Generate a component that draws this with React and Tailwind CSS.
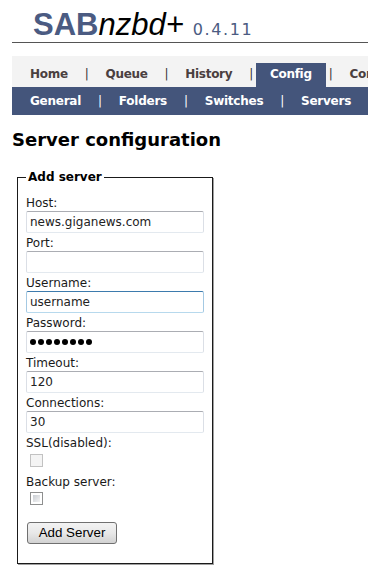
export default function App() {
  const Sep = ({ light }) => (
    <span className={light ? "mx-[3px] font-normal text-white" : "mx-[3px] font-normal text-[#333]"}>|</span>
  );

  const Field = ({ label, value, focused, password }) => (
    <>
      <div className="h-[16px] leading-[16px]">{label}</div>
      <div
        className={
          focused
            ? "mb-[2px] flex h-[22px] w-[178px] items-center rounded-[2px] border border-x-[#a4c9e3] border-t-[#3d7bad] border-b-[#b7d9ed] bg-white pl-[3px] text-[#222]"
            : "mb-[2px] flex h-[22px] w-[178px] items-center rounded-[2px] border border-x-[#dbdfe6] border-t-[#abadb3] border-b-[#e3e9ef] bg-white pl-[3px] text-[#222]"
        }
      >
        {password ? (
          <div className="flex gap-[2px]">
            {[0, 1, 2, 3, 4, 5, 6, 7].map((i) => (
              <span key={i} className="h-[6px] w-[6px] rounded-full bg-black" />
            ))}
          </div>
        ) : (
          value
        )}
      </div>
    </>
  );

  return (
    <div className="h-[571px] w-[368px] overflow-hidden bg-white pl-[12px] font-['DejaVu_Sans',Verdana,sans-serif] text-[12px] text-[#1a1a1a]">
      {/* Header */}
      <div className="flex h-[43px] items-baseline border-b border-[#555] pl-[21px] pt-[9px] leading-[31px]">
        <span className="font-['Liberation_Sans',Arial,sans-serif] text-[31px] font-bold text-[#4b5b82]">SAB</span>
        <span className="font-['Liberation_Sans',Arial,sans-serif] text-[31px] italic text-black">nzbd+</span>
        <span className="ml-[9px] text-[16px] tracking-[1.6px] text-[#4b5b82]">0.4.11</span>
      </div>

      {/* Top nav */}
      <div className="mt-[13px] flex h-[31px] items-end whitespace-nowrap bg-[#f3f3f3] pl-[4px] font-bold tracking-[-0.3px]">
        <span className="h-[24px] px-[14px] leading-[22px] text-[#4a4040]">Home</span>
        <span className="h-[24px] leading-[22px]"><Sep /></span>
        <span className="h-[24px] px-[14px] leading-[22px] text-[#4a4040]">Queue</span>
        <span className="h-[24px] leading-[22px]"><Sep /></span>
        <span className="h-[24px] px-[14px] leading-[22px] text-[#4a4040]">History</span>
        <span className="h-[24px] leading-[22px]"><Sep /></span>
        <span className="h-[24px] bg-[#44557b] px-[14px] leading-[22px] text-white">Config</span>
        <span className="h-[24px] leading-[22px]"><Sep /></span>
        <span className="h-[24px] px-[14px] leading-[22px] text-[#4a4040]">Connections</span>
      </div>

      {/* Sub nav */}
      <div className="flex h-[28px] items-center whitespace-nowrap bg-[#44557b] pl-[4px] font-bold leading-[28px] tracking-[-0.25px] text-white">
        <span className="px-[14px]">General</span>
        <Sep light />
        <span className="px-[14px]">Folders</span>
        <Sep light />
        <span className="px-[14px]">Switches</span>
        <Sep light />
        <span className="px-[14px]">Servers</span>
      </div>

      {/* Title */}
      <h1 className="mt-[14px] text-[18px] font-bold leading-[22px] text-black">Server configuration</h1>

      {/* Fieldset */}
      <fieldset className="ml-[5px] mt-[18px] w-[196px] border border-[#1a1a1a] pb-[19px] pl-[8px] pr-[8px] pt-[10px] shadow-[1px_1px_0_#a0a0a0]">
        <legend className="px-[2px] text-[12px] font-bold leading-[16px] text-black">Add server</legend>
        <Field label="Host:" value="news.giganews.com" />
        <Field label="Port:" value="" />
        <Field label="Username:" value="username" focused />
        <Field label="Password:" password />
        <Field label="Timeout:" value="120" />
        <Field label="Connections:" value="30" />
        <div className="h-[16px] leading-[16px]">SSL(disabled):</div>
        <div className="ml-[4px] mt-[3px] h-[13px] w-[13px] border border-[#c2c2c2] bg-[#f4f4f4]" />
        <div className="mt-[7px] h-[16px] leading-[16px]">Backup server:</div>
        <div className="ml-[4px] mt-[2px] h-[13px] w-[13px] border border-[#8e8f8f] bg-white p-[2px]">
          <div className="h-full w-full bg-gradient-to-br from-[#c9cdd3] to-[#f4f4f4]" />
        </div>
        <button className="ml-[1px] mt-[17px] flex h-[22px] w-[90px] items-center justify-center rounded-[3px] border border-[#707070] bg-gradient-to-b from-[#f3f3f3] via-[#e8e8e8] to-[#d2d2d2] font-['Liberation_Sans',Arial,sans-serif] text-[13.33px] text-black">
          Add Server
        </button>
      </fieldset>
    </div>
  );
}
